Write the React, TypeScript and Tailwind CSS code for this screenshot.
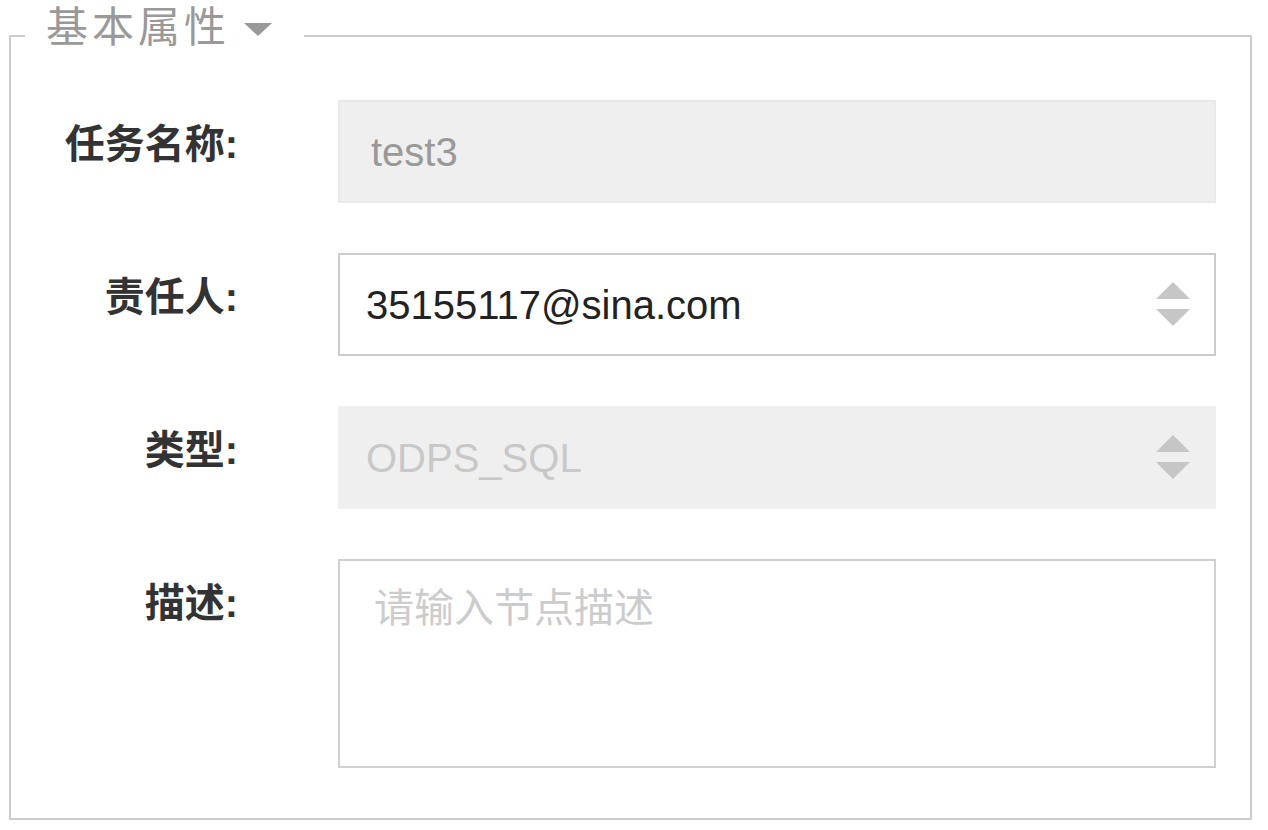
import React from "react";

const cjk = { fontFamily: '"Liberation Sans", "Noto Sans CJK SC", sans-serif' };

function Arrows() {
  return (
    <svg width="34" height="46" viewBox="0 0 34 46" className="shrink-0">
      <polygon points="17,0 34,17 0,17" fill="#c6c6c6" />
      <polygon points="0,27 34,27 17,44" fill="#c6c6c6" />
    </svg>
  );
}

function Label({ children }: { children: React.ReactNode }) {
  return (
    <div
      className="pt-[20px] text-right text-[40px] leading-[48px] font-bold text-[#333]"
      style={cjk}
    >
      {children}
    </div>
  );
}

export default function App() {
  return (
    <div className="w-[1268px] h-[830px] bg-white pl-[9px] pt-[4px]" style={cjk}>
      <fieldset className="w-[1243px] border-2 border-[#cccccc] pl-[14px] pr-[34px] pt-[32px] pb-[50px]">
        <legend className="pb-4 pl-[21px] pr-[32px]">
          <div className="flex items-center">
            <span className="text-[42px] leading-[48px] tracking-[4px] text-[#999]" style={cjk}>
              基本属性
            </span>
            <svg width="28" height="13" viewBox="0 0 28 13" className="ml-[14px] mt-[2px]">
              <polygon points="0,0 28,0 14,13" fill="#999" />
            </svg>
          </div>
        </legend>
        <div className="grid grid-cols-[213px_878px] gap-x-[100px] gap-y-[50px]">
          <Label>任务名称:</Label>
          <div className="h-[103px] flex items-center bg-[#efefef] border-2 border-[#e9e9e9] pl-[31px] text-[40px] text-[#999]">
            test3
          </div>

          <Label>责任人:</Label>
          <div className="h-[103px] flex items-center justify-between bg-white border-2 border-[#cccccc] pl-[26px] pr-[24px] text-[40px] text-[#222]">
            <span>35155117@sina.com</span>
            <Arrows />
          </div>

          <Label>类型:</Label>
          <div className="h-[103px] flex items-center justify-between bg-[#efefef] border-2 border-[#efefef] pl-[26px] pr-[24px] text-[40px] text-[#c8c8c8]">
            <span>ODPS_SQL</span>
            <Arrows />
          </div>

          <Label>描述:</Label>
          <div className="h-[209px] bg-white border-2 border-[#d0d0d0] pl-[34px] pt-[23px] text-[40px] leading-[48px] text-[#cccccc]">
            请输入节点描述
          </div>
        </div>
      </fieldset>
    </div>
  );
}
